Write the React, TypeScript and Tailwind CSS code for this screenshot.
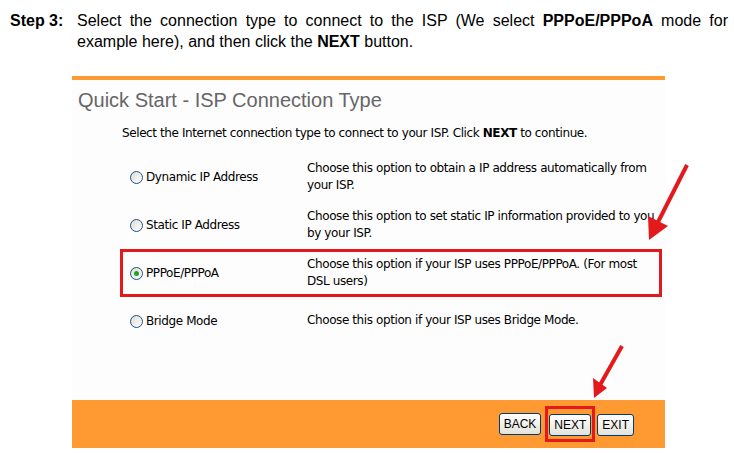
const options = [
  {
    label: "Dynamic IP Address",
    desc: "Choose this option to obtain a IP address automatically from your ISP.",
  },
  {
    label: "Static IP Address",
    desc: "Choose this option to set static IP information provided to you by your ISP.",
  },
  {
    label: "PPPoE/PPPoA",
    desc: "Choose this option if your ISP uses PPPoE/PPPoA. (For most DSL users)",
    selected: true,
  },
  {
    label: "Bridge Mode",
    desc: "Choose this option if your ISP uses Bridge Mode.",
  },
]

function Radio({ on }: { on?: boolean }) {
  return (
    <span className="w-[13px] h-[13px] rounded-full border border-[#1c5180] bg-gradient-to-br from-[#dcdcd6] to-white flex items-center justify-center shrink-0">
      {on && <span className="w-[5px] h-[5px] rounded-full bg-[#21a121]" />}
    </span>
  )
}

function Btn({ text }: { text: string }) {
  return (
    <button className="h-[22px] px-[4px] rounded-[3px] border border-[#003c74] bg-gradient-to-b from-white to-[#e3e3db] text-[12px] text-black leading-none font-['Liberation_Sans',Arial,sans-serif]">
      {text}
    </button>
  )
}

export default function App() {
  return (
    <div className="relative w-[734px] h-[453px] bg-white font-['Liberation_Sans',Arial,sans-serif] text-black overflow-hidden">
      <div className="flex pt-[10px] text-[16px] leading-[21px]">
        <span className="w-[77px] pl-[10px] font-bold shrink-0">Step 3:</span>
        <p className="w-[651px]">
          <span className="block text-justify [text-align-last:justify]">
            Select the connection type to connect to the ISP (We select <b>PPPoE/PPPoA</b> mode for
          </span>
          <span className="block">
            example here), and then click the <b>NEXT</b> button.
          </span>
        </p>
      </div>

      <div className="ml-[72px] mt-[24px] w-[593px] bg-[#fdfdfd] border-t-[4px] border-[#ff9a33]">
        <h2 className="pl-[6px] pt-[9px] text-[20px] leading-[23px] text-[#666666]">
          Quick Start - ISP Connection Type
        </h2>
        <p className="pl-[50px] mt-[14px] text-[12px] leading-[14px] font-['DejaVu_Sans',sans-serif] tracking-[-0.4px]">
          Select the Internet connection type to connect to your ISP. Click <b>NEXT</b> to continue.
        </p>
        <div className="mt-[13px] flex flex-col text-[12px] leading-[17px] font-['DejaVu_Sans',sans-serif] tracking-[-0.4px]">
          {options.map((o) => (
            <div
              key={o.label}
              className={
                o.selected
                  ? "ml-[48px] mr-[3px] h-[48px] flex items-center border-[3px] border-[#e3191c]"
                  : "ml-[48px] mr-[3px] h-[48px] flex items-center border-[3px] border-transparent"
              }
            >
              <div className="w-[184px] pl-[7px] flex items-center gap-[3px]">
                <Radio on={o.selected} />
                <span>{o.label}</span>
              </div>
              <p className="w-[350px] pb-[1px]">{o.desc}</p>
            </div>
          ))}
        </div>
        <div className="mt-[55px] h-[48px] bg-[#ff9a33] flex items-center justify-end pr-[31px]">
          <Btn text="BACK" />
          <div className="ml-[4px] border-[3px] border-[#e3191c] px-[1px] py-[3px]">
            <Btn text="NEXT" />
          </div>
          <div className="ml-[2px]">
            <Btn text="EXIT" />
          </div>
        </div>
      </div>

      <svg className="absolute inset-0 pointer-events-none" width="734" height="453">
        <line x1="687" y1="165" x2="657" y2="224" stroke="#e3191c" strokeWidth="4" />
        <polygon points="649,240 648,216 668,226" fill="#e3191c" />
        <line x1="622" y1="346" x2="600" y2="385" stroke="#e3191c" strokeWidth="4" />
        <polygon points="594,398 593,378 607,388" fill="#e3191c" />
      </svg>
    </div>
  )
}
